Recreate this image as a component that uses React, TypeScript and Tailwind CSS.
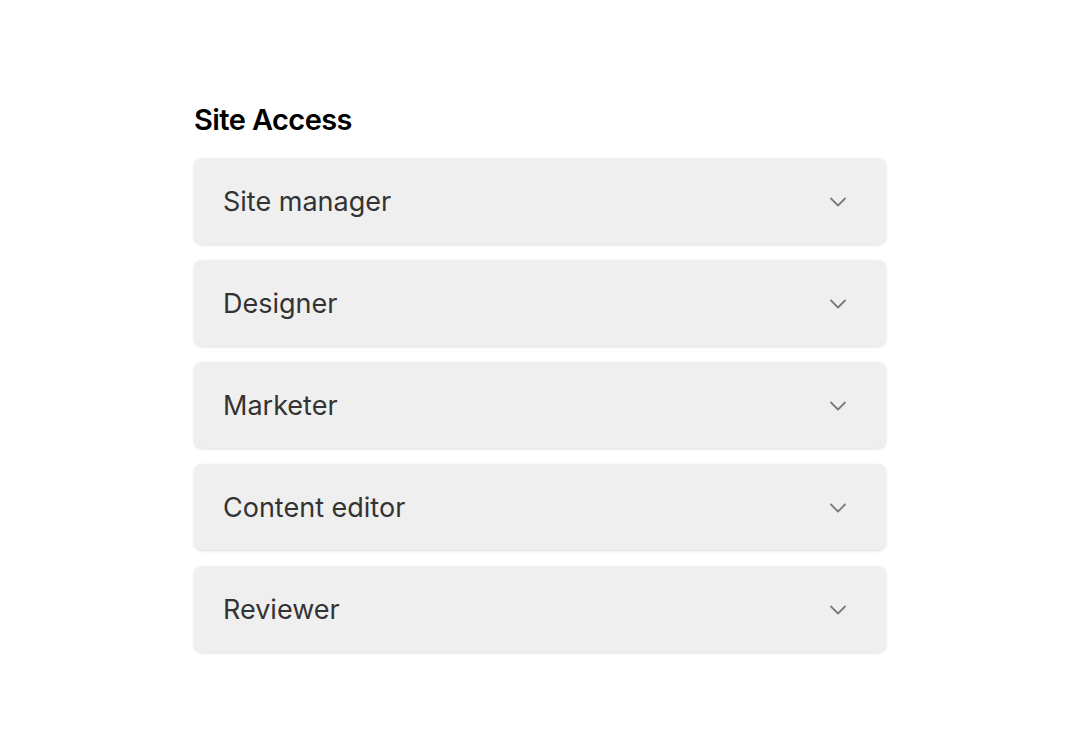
import React from "react";

const roles = ["Site manager", "Designer", "Marketer", "Content editor", "Reviewer"];

const Chevron = () => (
  <svg width="24" height="24" viewBox="0 0 24 24" fill="none" stroke="#7a7a7a" strokeWidth="1.8" strokeLinecap="round" strokeLinejoin="round">
    <path d="M5 9.5l7 7 7-7" />
  </svg>
);

export default function App() {
  return (
    <div className="min-h-[748px] w-full bg-white font-['Inter',sans-serif]">
      <div className="ml-[194px] w-[692px] pt-[100px]">
        <h1 className="text-[29px] font-semibold leading-[40px] tracking-[-0.02em] text-black">Site Access</h1>
        <div className="mt-[18px] flex flex-col gap-4">
          {roles.map((role) => (
            <div
              key={role}
              className="flex h-[86px] items-center justify-between rounded-lg bg-[#efefef] pl-[29px] pr-[36px] shadow-[0_1px_3px_rgba(0,0,0,0.14)]"
            >
              <span className="text-[27px] leading-none text-[#333333]">{role}</span>
              <Chevron />
            </div>
          ))}
        </div>
      </div>
    </div>
  );
}
